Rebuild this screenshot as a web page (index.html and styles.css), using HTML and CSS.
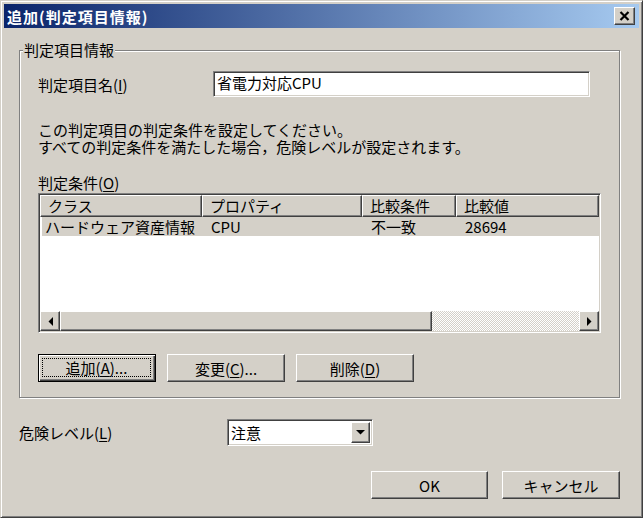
FILE: index.html
```html
<!DOCTYPE html>
<html lang="ja">
<head>
  <meta charset="UTF-8">
  <title>追加(判定項目情報)</title>
  <link rel="stylesheet" href="styles.css">
</head>
<body>
  <div class="window">
    <!-- タイトルバー -->
    <div class="titlebar">
      <span class="title">追加(判定項目情報)</span>
      <span class="close raised">
        <svg width="11" height="10" viewBox="0 0 11 10"><path d="M1.5 1L9.5 9M9.5 1L1.5 9" stroke="#000" stroke-width="2.2"/></svg>
      </span>
    </div>

    <div class="body">
      <fieldset class="group">
        <legend>判定項目情報</legend>
        <div class="group-inner">
          <div class="name-row">
            <label class="name-label">判定項目名(<u>I</u>)</label>
            <div class="textbox sunken">省電力対応CPU</div>
          </div>

          <p class="desc">この判定項目の判定条件を設定してください。<br>すべての判定条件を満たした場合，危険レベルが設定されます。</p>

          <div class="list-label">判定条件(<u>O</u>)</div>
          <div class="listview sunken">
            <div class="lv-header">
              <div class="lv-col raised">クラス</div>
              <div class="lv-col raised">プロパティ</div>
              <div class="lv-col raised">比較条件</div>
              <div class="lv-col raised">比較値</div>
            </div>
            <div class="lv-row">
              <div class="lv-cell first">ハードウェア資産情報</div>
              <div class="lv-cell">CPU</div>
              <div class="lv-cell">不一致</div>
              <div class="lv-cell">28694</div>
            </div>
            <div class="lv-space"></div>
            <div class="hscroll">
              <span class="sb-btn raised">
                <svg width="5" height="9" viewBox="0 0 5 9"><path d="M5 0V9L0.5 4.5z"/></svg>
              </span>
              <span class="sb-thumb raised"></span>
              <span class="sb-track"></span>
              <span class="sb-btn raised">
                <svg width="5" height="9" viewBox="0 0 5 9"><path d="M0 0V9L4.5 4.5z"/></svg>
              </span>
            </div>
          </div>

          <div class="btn-row">
            <button class="btn default"><span class="focus">追加(<u>A</u>)...</span></button>
            <button class="btn raised">変更(<u>C</u>)...</button>
            <button class="btn raised">削除(<u>D</u>)</button>
          </div>
        </div>
      </fieldset>

      <div class="level-row">
        <label class="level-label">危険レベル(<u>L</u>)</label>
        <div class="combo sunken">
          <span class="combo-text">注意</span>
          <span class="drop raised">
            <svg width="9" height="5" viewBox="0 0 9 5"><path d="M0 0H9L4.5 4.5z"/></svg>
          </span>
        </div>
      </div>

      <div class="footer">
        <button class="btn raised ok">OK</button>
        <button class="btn raised">キャンセル</button>
      </div>
    </div>
  </div>
</body>
</html>
```

FILE: styles.css
```css
* {
  box-sizing: border-box;
}

body {
  margin: 0;
  background: #d4d0c8;
  font-family: "Noto Sans CJK JP", "Liberation Sans", sans-serif;
  font-size: 15px;
  line-height: 17px;
  color: #000;
}

u {
  text-underline-offset: 2px;
}

/* 立体枠 */
.raised {
  background: #d4d0c8;
  border: 1px solid;
  border-color: #fff #404040 #404040 #fff;
  box-shadow: inset -1px -1px #808080;
}

.sunken {
  background: #fff;
  border: 1px solid;
  border-color: #808080 #fff #fff #808080;
  box-shadow: inset 1px 1px #404040, inset -1px -1px #d4d0c8;
  padding: 1px;
}

.window {
  width: 643px;
  height: 518px;
  background: #d4d0c8;
  border: 1px solid;
  border-color: #d4d0c8 #404040 #404040 #d4d0c8;
  box-shadow: inset 1px 1px #fff, inset -1px -1px #808080;
  padding: 3px;
  display: flex;
  flex-direction: column;
}

.titlebar {
  height: 24px;
  background: linear-gradient(to right, #0a246a, #a6caf0);
  display: flex;
  align-items: center;
  justify-content: space-between;
  padding: 0 4px 0 3px;
}

.title {
  color: #fff;
  font-weight: bold;
  letter-spacing: 1px;
}

.close {
  width: 21px;
  height: 18px;
  display: flex;
  align-items: center;
  justify-content: center;
}

.body {
  flex: 1;
  display: flex;
  flex-direction: column;
  padding: 0 19px 0 15px;
}

.group {
  margin: 14px 0 0;
  padding: 0;
  min-width: 0;
  border: 1px solid #808080;
  box-shadow: 1px 1px 0 #fff, inset 1px 1px 0 #fff;
}

.group legend {
  margin-left: 3px;
  padding: 0 1px;
  line-height: 16px;
  background: #d4d0c8;
}

.group-inner {
  padding: 13px 18px 15px;
}

.name-row {
  display: flex;
  align-items: center;
}

.name-label {
  width: 175px;
}

.textbox {
  width: 377px;
  height: 26px;
  padding: 0 3px;
  line-height: 22px;
}

.desc {
  margin: 24px 0 0;
}

.list-label {
  margin-top: 19px;
}

.listview {
  margin-top: 2px;
  height: 140px;
  display: flex;
  flex-direction: column;
}

.lv-header {
  display: grid;
  grid-template-columns: 162px 160px 94px 1fr;
  height: 22px;
}

.lv-col {
  padding-left: 7px;
  line-height: 19px;
}

.lv-row {
  display: grid;
  grid-template-columns: 160px 160px 94px 1fr;
  height: 19px;
  margin-left: 2px;
  background: #d4d0c8;
  line-height: 19px;
}

.lv-cell {
  padding-left: 9px;
  white-space: nowrap;
}

.lv-cell.first {
  padding-left: 3px;
}

.lv-space {
  flex: 1;
}

.hscroll {
  height: 20px;
  display: flex;
}

.sb-btn {
  width: 20px;
  display: flex;
  align-items: center;
  justify-content: center;
}

.sb-thumb {
  width: 372px;
}

.sb-track {
  flex: 1;
  background-color: #d4d0c8;
  background-image: repeating-conic-gradient(#fff 0 25%, #d4d0c8 0 50%);
  background-size: 2px 2px;
}

.btn-row {
  display: flex;
  gap: 11px;
  margin-top: 21px;
}

.btn {
  width: 118px;
  height: 28px;
  padding: 0;
  font: inherit;
  color: #000;
  display: flex;
  align-items: center;
  justify-content: center;
}

.btn.default {
  background: #d4d0c8;
  border: 1px solid #000;
  box-shadow: inset 1px 1px #fff, inset -1px -1px #404040, inset -2px -2px #808080;
  padding: 3px 4px 4px 3px;
}

.focus {
  flex: 1;
  align-self: stretch;
  border: 1px dotted #000;
  display: flex;
  align-items: center;
  justify-content: center;
}

.level-row {
  display: flex;
  align-items: center;
  margin-top: 21px;
}

.level-label {
  width: 208px;
}

.combo {
  width: 146px;
  height: 27px;
  display: flex;
  padding: 2px;
}

.combo-text {
  flex: 1;
  line-height: 21px;
  padding-left: 1px;
}

.drop {
  width: 19px;
  display: flex;
  align-items: center;
  justify-content: center;
}

.footer {
  display: flex;
  justify-content: flex-end;
  gap: 14px;
  margin-top: 25px;
}

.footer .ok {
  width: 117px;
}
```
